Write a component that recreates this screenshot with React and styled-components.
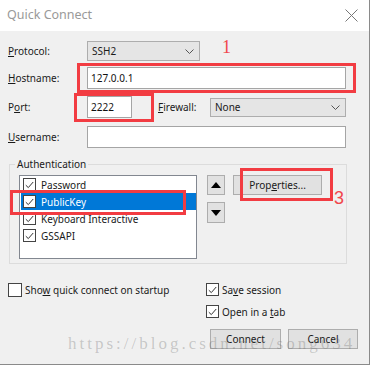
import React from 'react';
import styled, { createGlobalStyle } from 'styled-components';

const GlobalStyle = createGlobalStyle`
  html, body {
    margin: 0;
    padding: 0;
    background: #f0f0f0;
  }
  body {
    font-family: "Noto Sans", "Open Sans", sans-serif;
    font-size: 10px;
    color: #1a1a1a;
  }
`;

const Window = styled.div`
  position: relative;
  width: 370px;
  height: 365px;
  box-sizing: border-box;
  background: #f0f0f0;
  border-right: 1px solid #8a8a8a;
  border-bottom: 1px solid #8a8a8a;
  overflow: hidden;
`;

const TitleBar = styled.div`
  height: 31px;
  background: #fff;
  display: flex;
  align-items: center;
  justify-content: space-between;
  padding: 0 11px 0 7px;
`;

const Title = styled.span`
  font-size: 12.5px;
  color: #999;
  padding-bottom: 2px;
`;

const Body = styled.div`
  padding: 10px 0 0 8px;
`;

const FieldRow = styled.div`
  display: flex;
  align-items: center;
  height: ${p => p.$h || 22}px;
  margin-top: ${p => p.$mt || 0}px;
`;

const Label = styled.span`
  width: ${p => p.$w || 79}px;
  margin-left: ${p => p.$ml || 0}px;
  flex: none;
  line-height: 12px;
`;

const U = styled.span`
  text-decoration: underline;
  text-underline-offset: 1px;
`;

const Select = styled.div`
  width: ${p => p.$w}px;
  height: ${p => p.$h || 20}px;
  box-sizing: border-box;
  border: 1px solid #adadad;
  background: #e5e5e5;
  display: flex;
  align-items: center;
  justify-content: space-between;
  padding: 0 5px 0 4px;
`;

const Input = styled.div`
  width: ${p => p.$w}px;
  height: 22px;
  box-sizing: border-box;
  border: 1px solid #a5a5a5;
  background: #fff;
  display: flex;
  align-items: center;
  padding-left: 3px;
  color: #111;
`;

const Group = styled.fieldset`
  margin: 10px 0 0 1px;
  width: 338px;
  box-sizing: border-box;
  border: 1px solid #dcdcdc;
  padding: 0 0 4px 9px;
  display: flex;
  align-items: flex-start;
`;

const Legend = styled.legend`
  padding: 0 2px;
  margin-left: -4px;
  line-height: 12px;
`;

const GroupInner = styled.div`
  display: flex;
  align-items: flex-start;
  padding-top: 5px;
`;

const List = styled.div`
  width: 178px;
  height: 84px;
  box-sizing: border-box;
  border: 1px solid #828790;
  background: #fff;
  padding: 0 0 0 1px;
`;

const ListItem = styled.div`
  height: 17px;
  display: flex;
  align-items: center;
  gap: 5px;
  padding-left: 2px;
  background: ${p => (p.$selected ? '#0078d7' : 'transparent')};
  color: ${p => (p.$selected ? '#fff' : '#1a1a1a')};
`;

const Box = styled.span`
  width: 13px;
  height: 13px;
  box-sizing: border-box;
  flex: none;
  border: 1px solid #444;
  background: #fff;
  display: flex;
  align-items: center;
  justify-content: center;
`;

const EmptyBox = styled(Box)`
  width: 14px;
  height: 14px;
`;

const ArrowCol = styled.div`
  display: flex;
  flex-direction: column;
  gap: 7px;
  margin-left: 10px;
`;

const Button = styled.div`
  width: ${p => p.$w}px;
  height: ${p => p.$h || 20}px;
  box-sizing: border-box;
  border: 1px solid #adadad;
  background: #e1e1e1;
  display: flex;
  align-items: center;
  justify-content: center;
  color: #1a1a1a;
`;

const PropsButton = styled(Button)`
  margin-left: 8px;
`;

const Bottom = styled.div`
  display: grid;
  grid-template-columns: 198px 1fr;
  margin-top: 19px;
`;

const CheckRow = styled.div`
  display: flex;
  align-items: center;
  gap: 3px;
  height: 13px;
`;

const RightCol = styled.div`
  display: flex;
  flex-direction: column;
  gap: 9px;
`;

const ButtonRow = styled.div`
  display: flex;
  gap: 7px;
  margin-left: 4px;
  margin-top: 2px;
`;

const Watermark = styled.div`
  position: absolute;
  left: 68px;
  top: 334px;
  font-family: "Liberation Serif", "DejaVu Serif", serif;
  font-size: 17px;
  letter-spacing: 3px;
  line-height: 20px;
  color: rgba(110, 110, 110, 0.33);
  white-space: nowrap;
  pointer-events: none;
`;

const Mark = styled.div`
  position: absolute;
  left: ${p => p.$x}px;
  top: ${p => p.$y}px;
  width: ${p => p.$w}px;
  height: ${p => p.$h}px;
  box-sizing: border-box;
  border: 3px solid #f23c42;
  pointer-events: none;
`;

const Num = styled.span`
  position: absolute;
  left: ${p => p.$x}px;
  top: ${p => p.$y}px;
  font-family: ${p => (p.$serif ? '"Liberation Serif", serif' : '"Liberation Sans", sans-serif')};
  font-size: 18px;
  line-height: 20px;
  color: #f0474c;
`;

const Check = () => (
  <Box>
    <svg width="9" height="8" viewBox="0 0 9 8">
      <path d="M0.8 4.2 L3.3 6.6 L8.2 1" fill="none" stroke="#333" strokeWidth="1" />
    </svg>
  </Box>
);

const Chevron = () => (
  <svg width="9" height="5" viewBox="0 0 9 5">
    <path d="M0.5 0.5 L4.5 4.5 L8.5 0.5" fill="none" stroke="#555" strokeWidth="1" />
  </svg>
);

const Tri = ({ up }) => (
  <svg width="10" height="6" viewBox="0 0 10 6">
    <path d={up ? 'M0 6 L5 0 L10 6 Z' : 'M0 0 L5 6 L10 0 Z'} fill="#000" />
  </svg>
);

const CloseIcon = () => (
  <svg width="13" height="13" viewBox="0 0 13 13">
    <path d="M0.5 0.5 L12.5 12.5 M12.5 0.5 L0.5 12.5" stroke="#777" strokeWidth="1" />
  </svg>
);

const methods = [
  { name: 'Password' },
  { name: 'PublicKey', selected: true },
  { name: 'Keyboard Interactive' },
  { name: 'GSSAPI' },
];

export default function App() {
  return (
    <>
      <GlobalStyle />
      <Window>
        <TitleBar>
          <Title>Quick Connect</Title>
          <CloseIcon />
        </TitleBar>
        <Body>
          <FieldRow $h={20}>
            <Label><U>P</U>rotocol:</Label>
            <Select $w={113}>
              <span>SSH2</span>
              <Chevron />
            </Select>
          </FieldRow>
          <FieldRow $mt={6}>
            <Label><U>H</U>ostname:</Label>
            <Input $w={259}>127.0.0.1</Input>
          </FieldRow>
          <FieldRow $mt={7}>
            <Label>P<U>o</U>rt:</Label>
            <Input $w={45}>2222</Input>
            <Label $w={52} $ml={26}><U>F</U>irewall:</Label>
            <Select $w={136} $h={19}>
              <span>None</span>
              <Chevron />
            </Select>
          </FieldRow>
          <FieldRow $mt={8}>
            <Label><U>U</U>sername:</Label>
            <Input $w={259} />
          </FieldRow>
          <Group>
            <Legend>Authentication</Legend>
            <GroupInner>
              <List>
                {methods.map(m => (
                  <ListItem key={m.name} $selected={m.selected}>
                    <Check />
                    <span>{m.name}</span>
                  </ListItem>
                ))}
              </List>
              <ArrowCol>
                <Button $w={18} $h={20}><Tri up /></Button>
                <Button $w={18} $h={21}><Tri /></Button>
              </ArrowCol>
              <PropsButton $w={89}>Prop<U>e</U>rties...</PropsButton>
            </GroupInner>
          </Group>
          <Bottom>
            <CheckRow>
              <EmptyBox />
              <span>Sho<U>w</U> quick connect on startup</span>
            </CheckRow>
            <RightCol>
              <CheckRow>
                <Check />
                <span>Sa<U>v</U>e session</span>
              </CheckRow>
              <CheckRow>
                <Check />
                <span>Open in a <U>t</U>ab</span>
              </CheckRow>
              <ButtonRow>
                <Button $w={71}>Connect</Button>
                <Button $w={70}>Cancel</Button>
              </ButtonRow>
            </RightCol>
          </Bottom>
        </Body>
        <Watermark>https://blog.csdn.net/song634</Watermark>
        <Mark $x={77} $y={63} $w={279} $h={30} />
        <Mark $x={74} $y={93} $w={80} $h={29} />
        <Mark $x={10} $y={190} $w={176} $h={25} />
        <Mark $x={240} $y={168} $w={93} $h={33} />
        <Num $serif $x={222} $y={37}>1</Num>
        <Num $x={334} $y={188}>3</Num>
      </Window>
    </>
  );
}
